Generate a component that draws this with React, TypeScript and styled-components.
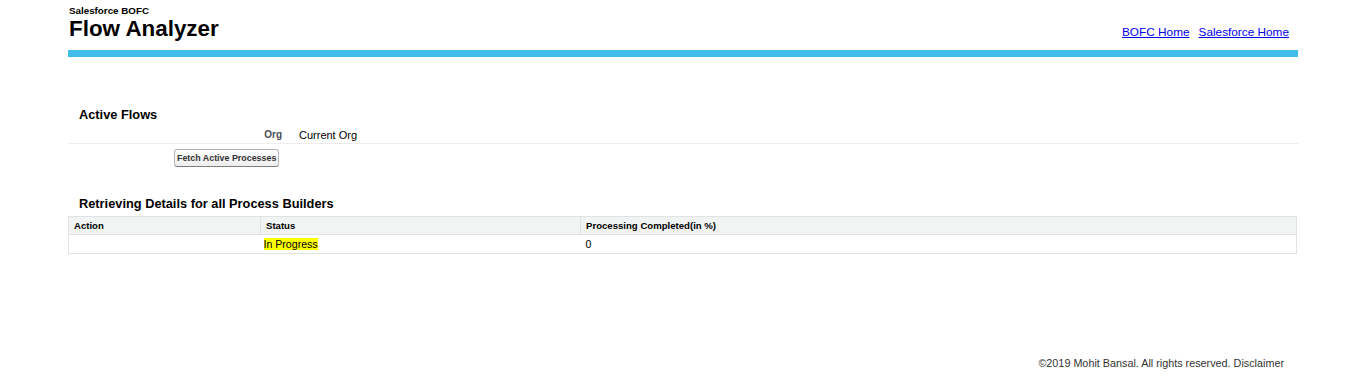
import * as React from 'react';
import styled, { createGlobalStyle } from 'styled-components';

const GlobalStyle = createGlobalStyle`
  body {
    margin: 0;
    font-family: "Liberation Sans", Arial, sans-serif;
    color: #000;
    background: #fff;
  }
`;

const Page = styled.div`
  width: 1230px;
  margin-left: 68px;
`;

const StyledHeader = styled.header`
  display: flex;
  justify-content: space-between;
  align-items: flex-end;
  height: 50px;
  border-bottom: 7px solid #41bdec;
`;

const TitleBlock = styled.div`
  padding-left: 1px;
  padding-bottom: 8px;
`;

const SubTitle = styled.div`
  font-size: 9.8px;
  font-weight: bold;
  line-height: 10px;
  margin-top: 1px;
`;

const Title = styled.h1`
  margin: 0;
  font-size: 22.4px;
  line-height: 26px;
  font-weight: bold;
`;

const Links = styled.nav`
  display: flex;
  gap: 9px;
  padding-right: 9px;
  padding-bottom: 11px;
`;

const HeaderLink = styled.a`
  font-size: 11.8px;
  color: #0000ee;
  text-decoration: underline;
`;

const Section = styled.section<{ top: number }>`
  margin-top: ${({ top }) => top}px;
`;

const SectionTitle = styled.h3`
  margin: 0;
  padding-left: 11px;
  font-size: 12.8px;
  line-height: 16px;
  font-weight: bold;
`;

const FieldRow = styled.div`
  display: flex;
  align-items: center;
  height: 17px;
  margin-top: 3px;
  border-bottom: 1px solid #ececec;
`;

const FieldLabel = styled.div`
  width: 214px;
  text-align: right;
  font-size: 10px;
  font-weight: bold;
  color: #4a4a56;
  padding-right: 7px;
`;

const FieldValue = styled.div`
  padding-left: 10px;
  font-size: 11px;
`;

const ButtonRow = styled.div`
  padding: 3px 0 0 106px;
`;

const Button = styled.button`
  font-family: "Liberation Sans", Arial, sans-serif;
  font-size: 8.9px;
  font-weight: bold;
  color: #333;
  height: 18px;
  padding: 0 2px;
  background: linear-gradient(#fff, #ededed);
  border: 1px solid #b5b5b5;
  border-bottom-color: #7f7f7f;
  border-radius: 3px;
`;

const Table = styled.table`
  width: 1229px;
  margin-top: 4px;
  border-collapse: collapse;
  table-layout: fixed;
  border: 1px solid #e0e3e5;
`;

const Th = styled.th<{ width?: number }>`
  box-sizing: border-box;
  width: ${({ width }) => (width ? `${width}px` : 'auto')};
  background: #f2f3f3;
  text-align: left;
  font-weight: bold;
  font-size: 9.6px;
  height: 18px;
  padding: 0 5px;
  border-left: 1px solid #e0e3e5;
  border-bottom: 1px solid #e0e3e5;
  &:first-child {
    border-left: none;
  }
`;

const Td = styled.td`
  height: 18px;
  padding: 0 5px;
  font-size: 10.6px;
`;

const Highlight = styled.span`
  background: #ffff00;
  margin-left: -2px;
`;

const Footer = styled.footer`
  margin-top: 103px;
  text-align: right;
  padding-right: 14px;
  font-size: 10.8px;
  color: #333;
`;

const App: React.FC = () => (
  <>
    <GlobalStyle />
    <Page>
      <StyledHeader>
        <TitleBlock>
          <SubTitle>Salesforce BOFC</SubTitle>
          <Title>Flow Analyzer</Title>
        </TitleBlock>
        <Links>
          <HeaderLink href="#">BOFC Home</HeaderLink>
          <HeaderLink href="#">Salesforce Home</HeaderLink>
        </Links>
      </StyledHeader>

      <Section top={50}>
        <SectionTitle>Active Flows</SectionTitle>
        <FieldRow>
          <FieldLabel>Org</FieldLabel>
          <FieldValue>Current Org</FieldValue>
        </FieldRow>
        <ButtonRow>
          <Button>Fetch Active Processes</Button>
        </ButtonRow>
      </Section>

      <Section top={29}>
        <SectionTitle>Retrieving Details for all Process Builders</SectionTitle>
        <Table>
          <thead>
            <tr>
              <Th width={192}>Action</Th>
              <Th width={320}>Status</Th>
              <Th>Processing Completed(in %)</Th>
            </tr>
          </thead>
          <tbody>
            <tr>
              <Td />
              <Td>
                <Highlight>In Progress</Highlight>
              </Td>
              <Td>0</Td>
            </tr>
          </tbody>
        </Table>
      </Section>

      <Footer>©2019 Mohit Bansal. All rights reserved. Disclaimer</Footer>
    </Page>
  </>
);

export default App;
